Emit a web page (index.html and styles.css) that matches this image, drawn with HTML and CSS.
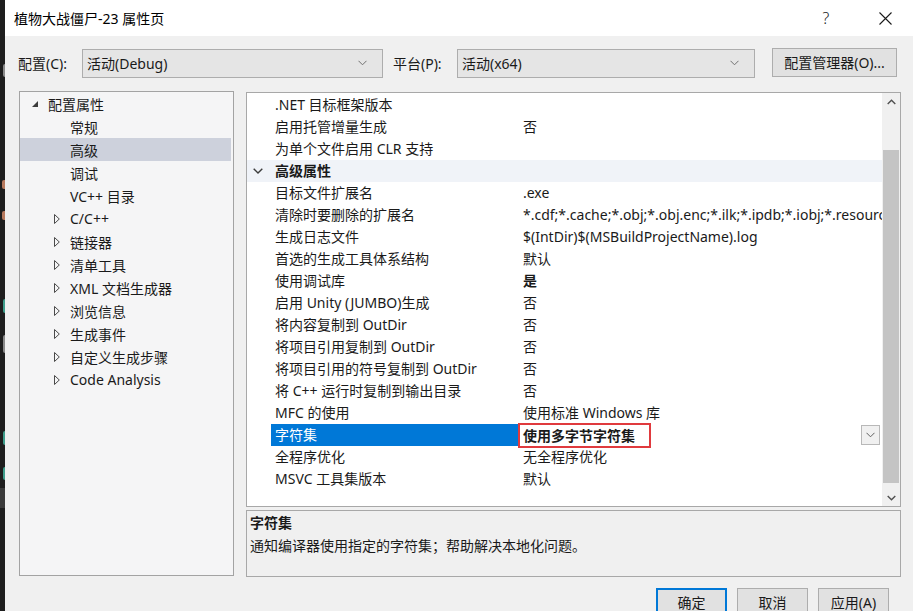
FILE: index.html
```html
<!DOCTYPE html>
<html lang="zh-CN">
<head>
<meta charset="utf-8">
<title>属性页</title>
<link rel="stylesheet" href="styles.css">
</head>
<body>
<div class="screen">
  <div class="editor-strip">
    <div class="frag f1 c-white"></div>
    <div class="frag f2 c-orange"></div>
    <div class="frag f3 c-orange"></div>
    <div class="frag f4 c-teal"></div>
    <div class="frag f5 c-white"></div>
    <div class="frag f6 c-teal"></div>
    <div class="frag f7 c-teal"></div>
    <div class="frag f8 hl"></div>
  </div>

  <div class="dialog">
    <div class="titlebar">
      <span class="title">植物大战僵尸-23 属性页</span>
      <span class="help">?</span>
      <span class="close"><svg width="13" height="13" viewBox="0 0 13 13"><path d="M0.5 0.5 L12.5 12.5 M12.5 0.5 L0.5 12.5" stroke="#1a1a1a" stroke-width="1.1" fill="none"/></svg></span>
    </div>

    <div class="content">
      <div class="config-row">
        <span class="cfg-label">配置(C):</span>
        <div class="combo combo-config"><span>活动(Debug)</span><svg class="chev" width="9" height="6" viewBox="0 0 9 6"><path d="M0.5 0.8 L4.5 4.8 L8.5 0.8" stroke="#707070" stroke-width="1" fill="none"/></svg></div>
        <span class="cfg-label plat">平台(P):</span>
        <div class="combo combo-plat"><span>活动(x64)</span><svg class="chev" width="9" height="6" viewBox="0 0 9 6"><path d="M0.5 0.8 L4.5 4.8 L8.5 0.8" stroke="#707070" stroke-width="1" fill="none"/></svg></div>
        <button class="btn btn-mgr">配置管理器(O)...</button>
      </div>

      <div class="main">
        <div class="tree">
          <div class="tree-row top"><span class="twisty"><svg width="6" height="6" viewBox="0 0 6 6"><polygon points="6,0 6,6 0,6" fill="#3c3c3c"/></svg></span><span>配置属性</span></div>
          <div class="tree-row leaf"><span>常规</span></div>
          <div class="tree-row leaf selected"><span>高级</span></div>
          <div class="tree-row leaf"><span>调试</span></div>
          <div class="tree-row leaf"><span>VC++ 目录</span></div>
          <div class="tree-row sub"><span class="twisty"><svg width="6" height="10" viewBox="0 0 6 10"><polygon points="0.5,0.5 5.3,5 0.5,9.5" fill="none" stroke="#4a4a4a" stroke-width="1"/></svg></span><span>C/C++</span></div>
          <div class="tree-row sub"><span class="twisty"><svg width="6" height="10" viewBox="0 0 6 10"><polygon points="0.5,0.5 5.3,5 0.5,9.5" fill="none" stroke="#4a4a4a" stroke-width="1"/></svg></span><span>链接器</span></div>
          <div class="tree-row sub"><span class="twisty"><svg width="6" height="10" viewBox="0 0 6 10"><polygon points="0.5,0.5 5.3,5 0.5,9.5" fill="none" stroke="#4a4a4a" stroke-width="1"/></svg></span><span>清单工具</span></div>
          <div class="tree-row sub"><span class="twisty"><svg width="6" height="10" viewBox="0 0 6 10"><polygon points="0.5,0.5 5.3,5 0.5,9.5" fill="none" stroke="#4a4a4a" stroke-width="1"/></svg></span><span>XML 文档生成器</span></div>
          <div class="tree-row sub"><span class="twisty"><svg width="6" height="10" viewBox="0 0 6 10"><polygon points="0.5,0.5 5.3,5 0.5,9.5" fill="none" stroke="#4a4a4a" stroke-width="1"/></svg></span><span>浏览信息</span></div>
          <div class="tree-row sub"><span class="twisty"><svg width="6" height="10" viewBox="0 0 6 10"><polygon points="0.5,0.5 5.3,5 0.5,9.5" fill="none" stroke="#4a4a4a" stroke-width="1"/></svg></span><span>生成事件</span></div>
          <div class="tree-row sub"><span class="twisty"><svg width="6" height="10" viewBox="0 0 6 10"><polygon points="0.5,0.5 5.3,5 0.5,9.5" fill="none" stroke="#4a4a4a" stroke-width="1"/></svg></span><span>自定义生成步骤</span></div>
          <div class="tree-row sub"><span class="twisty"><svg width="6" height="10" viewBox="0 0 6 10"><polygon points="0.5,0.5 5.3,5 0.5,9.5" fill="none" stroke="#4a4a4a" stroke-width="1"/></svg></span><span>Code Analysis</span></div>
        </div>

        <div class="right">
          <div class="grid">
            <div class="grid-rows">
              <div class="prow"><span class="pm"></span><span class="pn">.NET 目标框架版本</span><span class="pv"></span></div>
              <div class="prow"><span class="pm"></span><span class="pn">启用托管增量生成</span><span class="pv">否</span></div>
              <div class="prow"><span class="pm"></span><span class="pn">为单个文件启用 CLR 支持</span><span class="pv"></span></div>
              <div class="prow cat"><span class="pm"><svg width="10" height="6" viewBox="0 0 10 6"><path d="M0.7 0.7 L5 5 L9.3 0.7" stroke="#3c3c3c" stroke-width="1.4" fill="none"/></svg></span><span class="pn">高级属性</span><span class="pv"></span></div>
              <div class="prow"><span class="pm"></span><span class="pn">目标文件扩展名</span><span class="pv">.exe</span></div>
              <div class="prow"><span class="pm"></span><span class="pn">清除时要删除的扩展名</span><span class="pv">*.cdf;*.cache;*.obj;*.obj.enc;*.ilk;*.ipdb;*.iobj;*.resources;*.tlb;*.tli;*.tlh;*.tmp;*.rsp</span></div>
              <div class="prow"><span class="pm"></span><span class="pn">生成日志文件</span><span class="pv">$(IntDir)$(MSBuildProjectName).log</span></div>
              <div class="prow"><span class="pm"></span><span class="pn">首选的生成工具体系结构</span><span class="pv">默认</span></div>
              <div class="prow"><span class="pm"></span><span class="pn">使用调试库</span><span class="pv bold">是</span></div>
              <div class="prow"><span class="pm"></span><span class="pn">启用 Unity (JUMBO)生成</span><span class="pv">否</span></div>
              <div class="prow"><span class="pm"></span><span class="pn">将内容复制到 OutDir</span><span class="pv">否</span></div>
              <div class="prow"><span class="pm"></span><span class="pn">将项目引用复制到 OutDir</span><span class="pv">否</span></div>
              <div class="prow"><span class="pm"></span><span class="pn">将项目引用的符号复制到 OutDir</span><span class="pv">否</span></div>
              <div class="prow"><span class="pm"></span><span class="pn">将 C++ 运行时复制到输出目录</span><span class="pv">否</span></div>
              <div class="prow"><span class="pm"></span><span class="pn">MFC 的使用</span><span class="pv">使用标准 Windows 库</span></div>
              <div class="prow sel"><span class="pm"></span><span class="pn">字符集</span><span class="pv"><span class="annot">使用多字节字符集</span><span class="dd"><svg width="9" height="6" viewBox="0 0 9 6"><path d="M0.5 0.8 L4.5 4.8 L8.5 0.8" stroke="#606060" stroke-width="1" fill="none"/></svg></span></span></div>
              <div class="prow"><span class="pm"></span><span class="pn">全程序优化</span><span class="pv">无全程序优化</span></div>
              <div class="prow"><span class="pm"></span><span class="pn">MSVC 工具集版本</span><span class="pv">默认</span></div>
            </div>
            <div class="scrollbar">
              <div class="sb-btn"><svg width="9" height="6" viewBox="0 0 9 6"><path d="M0.7 5 L4.5 1.2 L8.3 5" stroke="#505050" stroke-width="1.4" fill="none"/></svg></div>
              <div class="sb-track"><div class="sb-thumb"></div></div>
              <div class="sb-btn"><svg width="9" height="6" viewBox="0 0 9 6"><path d="M0.7 1 L4.5 4.8 L8.3 1" stroke="#505050" stroke-width="1.4" fill="none"/></svg></div>
            </div>
          </div>
          <div class="desc">
            <div class="desc-title">字符集</div>
            <div class="desc-text">通知编译器使用指定的字符集；帮助解决本地化问题。</div>
          </div>
        </div>
      </div>

      <div class="buttons">
        <button class="btn btn-ok">确定</button>
        <button class="btn">取消</button>
        <button class="btn">应用(A)</button>
      </div>
    </div>
  </div>
</div>
</body>
</html>
```

FILE: styles.css
```css
* { box-sizing: border-box; }

html, body {
  margin: 0;
  padding: 0;
}

body {
  width: 913px;
  height: 611px;
  overflow: hidden;
  background: #1e1e1e;
  font-family: "Noto Sans", "Noto Sans CJK SC", sans-serif;
  font-size: 14px;
  color: #1a1a1a;
}

.screen {
  display: flex;
  width: 913px;
  height: 611px;
}

/* editor behind the dialog: only slivers of code glyphs show */
.editor-strip {
  width: 5px;
  flex: none;
  background: #1e1e1e;
  display: flex;
  flex-direction: column;
  align-items: flex-end;
  overflow: hidden;
}

.frag {
  flex: none;
  width: 3px;
  height: 12px;
  border-radius: 2px 0 0 2px;
}
.f1 { margin-top: 64px; height: 13px; width: 2px; }
.f2 { margin-top: 103px; height: 9px; }
.f3 { margin-top: 22px; height: 9px; }
.f4 { margin-top: 79px; height: 14px; width: 2px; }
.f5 { margin-top: 22px; height: 18px; width: 2px; }
.f6 { margin-top: 78px; height: 14px; width: 2px; }
.f7 { margin-top: 22px; height: 13px; width: 2px; }
.f8 { margin-top: 8px; height: 20px; width: 5px; border-radius: 0; }
.hl { background: #3a3a3a; }
.c-white { background: #8a8a8a; }
.c-orange { background: #b87a5e; }
.c-teal { background: #3f9e8c; }

/* dialog */
.dialog {
  flex: 1;
  background: #f0f0f0;
  display: flex;
  flex-direction: column;
}

.titlebar {
  height: 36px;
  background: #ffffff;
  display: flex;
  align-items: center;
  padding-left: 9px;
  flex: none;
}

.title {
  font-size: 14px;
  color: #000;
  flex: 1;
}

.help {
  font-family: "Noto Sans", sans-serif;
  font-size: 16px;
  font-weight: 300;
  color: #1a1a1a;
  width: 14px;
  margin-right: 46px;
  text-align: center;
}

.close {
  width: 13px;
  height: 13px;
  margin-right: 21px;
  display: flex;
}

.content {
  flex: 1;
  display: flex;
  flex-direction: column;
}

.config-row {
  display: flex;
  align-items: center;
  height: 29px;
  margin-top: 12px;
  padding-left: 13px;
}

.cfg-label {
  width: 64px;
  flex: none;
}
.cfg-label.plat { margin-left: 10px; }

.combo {
  height: 29px;
  margin-top: 1px;
  background: #e5e5e5;
  border: 1px solid #adadad;
  display: flex;
  align-items: center;
  justify-content: space-between;
  padding: 0 15px 0 4px;
  flex: none;
}
.combo-config { width: 301px; }
.combo-plat { width: 298px; }
.chev { flex: none; }

.btn {
  font-family: "Noto Sans", "Noto Sans CJK SC", sans-serif;
  font-size: 14px;
  color: #1a1a1a;
  background: #e1e1e1;
  border: 1px solid #adadad;
  padding: 0;
  height: 29px;
}

.btn-mgr {
  margin-left: 17px;
  width: 125px;
  margin-top: -1px;
}

.main {
  display: flex;
  align-items: flex-start;
  margin-top: 14px;
  padding-left: 14px;
}

.tree {
  width: 215px;
  height: 485px;
  background: #f5f5f6;
  border: 1px solid #a3a3a3;
  flex: none;
}

.tree-row {
  height: 23px;
  display: flex;
  align-items: center;
  white-space: nowrap;
}
.tree-row.top { padding-left: 12px; }
.tree-row.leaf { padding-left: 50px; }
.tree-row.sub { padding-left: 34px; }
.tree-row.selected {
  background: #cdd1dc;
  margin-right: 2px;
}

.twisty {
  width: 16px;
  flex: none;
  display: flex;
  align-items: center;
}

.right {
  margin-left: 12px;
  margin-top: 1px;
  display: flex;
  flex-direction: column;
  width: 655px;
}

.grid {
  height: 415px;
  background: #ffffff;
  border: 1px solid #a8a8a8;
  display: flex;
}

.grid-rows {
  flex: 1;
  min-width: 0;
  padding-top: 1px;
}

.prow {
  height: 22px;
  display: flex;
  align-items: center;
  white-space: nowrap;
}

.pm {
  width: 24px;
  flex: none;
  height: 22px;
  display: flex;
  align-items: center;
  justify-content: center;
  padding-right: 3px;
}

.pn {
  width: 247px;
  flex: none;
  height: 22px;
  line-height: 22px;
  padding-left: 4px;
  overflow: hidden;
}

.pv {
  flex: 1;
  min-width: 0;
  height: 22px;
  line-height: 22px;
  padding-left: 5px;
  overflow: hidden;
  display: flex;
  align-items: center;
}

.bold { font-weight: 700; }

.prow.cat { background: #f0f3f8; }
.prow.cat .pn { font-weight: 700; }

.prow.sel .pn {
  background: #0078d7;
  color: #ffffff;
}

.prow.sel .pv {
  overflow: visible;
}

.annot {
  font-weight: 700;
  border: 2px solid #e03a3e;
  height: 25px;
  line-height: 21px;
  margin-left: -5px;
  padding: 0 14px 0 3px;
  flex: none;
}

.dd {
  margin-left: auto;
  margin-right: 2px;
  width: 19px;
  height: 20px;
  border: 1px solid #b8b8b8;
  background: #f0f0f0;
  display: flex;
  align-items: center;
  justify-content: center;
}

.scrollbar {
  width: 18px;
  flex: none;
  background: #f0f0f0;
  display: flex;
  flex-direction: column;
}

.sb-btn {
  height: 17px;
  display: flex;
  align-items: center;
  justify-content: center;
  flex: none;
}

.sb-track {
  flex: 1;
  padding: 40px 1px 6px 1px;
  display: flex;
}

.sb-thumb {
  flex: 1;
  background: #c4c4c4;
}

.desc {
  margin-top: 3px;
  height: 67px;
  border: 1px solid #a8a8a8;
  background: #f0f0f0;
  padding: 0 0 0 3px;
}

.desc-title {
  font-weight: 700;
  line-height: 23px;
}

.desc-text {
  line-height: 23px;
}

.buttons {
  display: flex;
  justify-content: flex-end;
  gap: 10px;
  margin-top: 11px;
  padding-right: 24px;
}

.buttons .btn {
  width: 71px;
  height: 28px;
}

.btn-ok {
  border: 1px solid #0078d7;
  box-shadow: inset 0 0 0 1px #0078d7;
}
```
